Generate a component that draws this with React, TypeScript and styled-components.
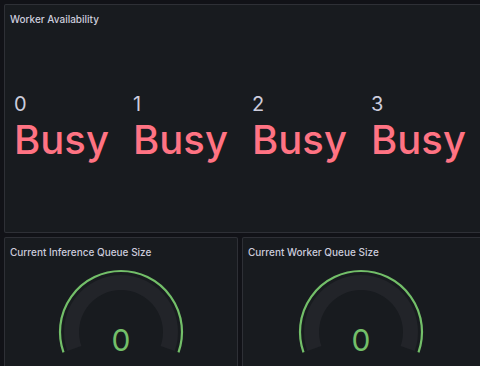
import React from 'react';
import styled, { createGlobalStyle } from 'styled-components';

const GlobalStyle = createGlobalStyle`
    html, body {
        margin: 0;
        padding: 0;
        background: #111217;
        overflow: hidden;
    }
    body {
        font-family: Inter, "Noto Sans", "Liberation Sans", sans-serif;
        color: #ccccdc;
    }
`;

const Page = styled.div`
    width: 480px;
    height: 366px;
    padding: 4px 0 0 4px;
    box-sizing: border-box;
    display: flex;
    flex-direction: column;
    gap: 4px;
    overflow: hidden;
`;

const Panel = styled.div<{ $height: number }>`
    height: ${(p) => p.$height}px;
    background: #181b1f;
    border: 1px solid rgba(204, 204, 220, 0.12);
    border-radius: 2px;
    box-sizing: border-box;
    display: flex;
    flex-direction: column;
    flex-shrink: 0;
`;

const WidePanel = styled(Panel)`
    width: 480px;
`;

const Title = styled.div`
    height: 27px;
    padding: 0 5px;
    display: flex;
    align-items: center;
    font-size: 10px;
    font-weight: 500;
    color: #ccccdc;
    white-space: nowrap;
    flex-shrink: 0;
`;

const StatGrid = styled.div`
    flex: 1;
    display: grid;
    grid-template-columns: repeat(4, 119px);
    align-content: center;
    padding-bottom: 8px;
`;

const StatItem = styled.div`
    padding-left: 9px;
    display: flex;
    flex-direction: column;
`;

const StatName = styled.div`
    font-size: 20px;
    line-height: 24px;
    color: #ccccdc;
`;

const StatValue = styled.div`
    font-size: 40px;
    line-height: 48px;
    font-weight: 500;
    color: #ff7383;
`;

const Row = styled.div`
    display: grid;
    grid-template-columns: 234px 242px;
    gap: 4px;
`;

const GaugeBox = styled.div`
    display: flex;
    justify-content: flex-start;
`;

const GaugeText = styled.text`
    font-family: Inter, "Noto Sans", "Liberation Sans", sans-serif;
    font-size: 30px;
    fill: #73bf69;
`;

const workers = ['0', '1', '2', '3'];

const arc = (cx: number, cy: number, r: number, a: number) => {
    const rad = (a * Math.PI) / 180;
    const dx = r * Math.cos(rad);
    const dy = r * Math.sin(rad);
    return `M ${cx - dx} ${cy + dy} A ${r} ${r} 0 1 1 ${cx + dx} ${cy + dy}`;
};

const Gauge: React.FC<{ width: number; value: number }> = ({ width, value }) => {
    const cx = width / 2;
    const cy = 67;
    return (
        <GaugeBox>
            <svg width={width} height={110} viewBox={`0 0 ${width} 110`}>
                <path d={arc(cx, cy, 49.5, 19.5)} stroke="#222429" strokeWidth={15} fill="none" />
                <path d={arc(cx, cy, 61, 19.5)} stroke="#73bf69" strokeWidth={2.2} fill="none" />
                <GaugeText x={cx} y={86} textAnchor="middle">
                    {value}
                </GaugeText>
            </svg>
        </GaugeBox>
    );
};

const App: React.FC = () => {
    return (
        <>
            <GlobalStyle />
            <Page>
                <WidePanel $height={229}>
                    <Title>Worker Availability</Title>
                    <StatGrid>
                        {workers.map((w) => (
                            <StatItem key={w}>
                                <StatName>{w}</StatName>
                                <StatValue>Busy</StatValue>
                            </StatItem>
                        ))}
                    </StatGrid>
                </WidePanel>
                <Row>
                    <Panel $height={140}>
                        <Title>Current Inference Queue Size</Title>
                        <Gauge width={232} value={0} />
                    </Panel>
                    <Panel $height={140}>
                        <Title>Current Worker Queue Size</Title>
                        <Gauge width={236} value={0} />
                    </Panel>
                </Row>
            </Page>
        </>
    );
};

export default App;
